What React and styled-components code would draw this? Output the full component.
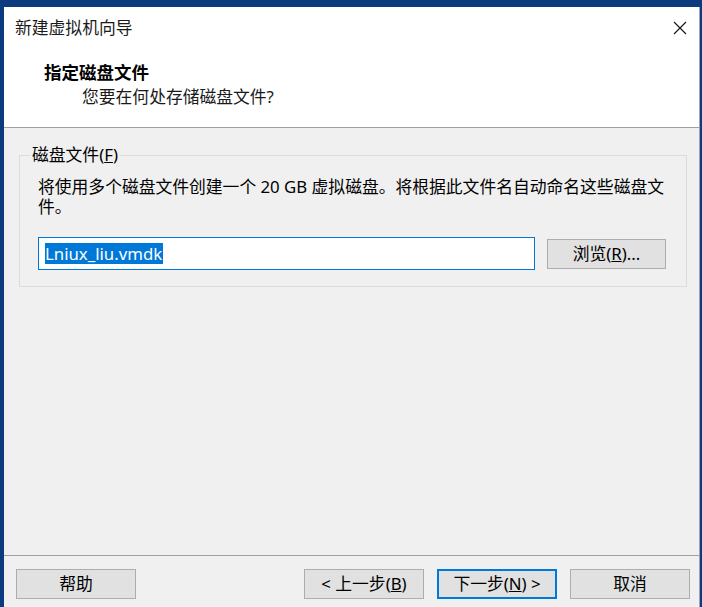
import React from "react"
import styled, { createGlobalStyle } from "styled-components"

const GlobalStyle = createGlobalStyle`
	html, body {
		margin: 0;
		padding: 0;
		background: #0b3a7e;
	}
	* {
		box-sizing: border-box;
	}
`

const FONT = `"Noto Sans", "Noto Sans CJK SC", sans-serif`

export default function App() {
	return (
		<>
			<GlobalStyle />
			<Frame>
				<Dialog>
					<TitleBar>
						<Title>新建虚拟机向导</Title>
						<CloseIcon viewBox="0 0 14 14">
							<path d="M1 1 L13 13 M13 1 L1 13" stroke="#1a1a1a" strokeWidth="1.2" />
						</CloseIcon>
					</TitleBar>

					<Header>
						<Heading>指定磁盘文件</Heading>
						<SubHeading>您要在何处存储磁盘文件?</SubHeading>
					</Header>

					<Body>
						<Group>
							<Legend>
								磁盘文件(<u>F</u>)
							</Legend>
							<GroupContent>
								<Description>
									将使用多个磁盘文件创建一个 20 GB 虚拟磁盘。将根据此文件名自动命名这些磁盘文件。
								</Description>
								<FileRow>
									<TextField>
										<Selected>Lniux_liu.vmdk</Selected>
									</TextField>
									<Button $width={119}>
										浏览(<u>R</u>)...
									</Button>
								</FileRow>
							</GroupContent>
						</Group>
					</Body>

					<Footer>
						<Button>帮助</Button>
						<Spacer />
						<Button>
							&lt; 上一步(<u>B</u>)
						</Button>
						<Button $primary>
							下一步(<u>N</u>) &gt;
						</Button>
						<Button>取消</Button>
					</Footer>
				</Dialog>
			</Frame>
		</>
	)
}

const Frame = styled.div`
	width: 702px;
	height: 607px;
	padding: 7px 2px 0 4px;
	background: #0b3a7e;
	overflow: hidden;
	display: flex;
`

const Dialog = styled.div`
	flex: 1;
	min-width: 0;
	display: flex;
	flex-direction: column;
	background: #f0f0f0;
	border-right: 1px solid #9ba6b4;
	font-family: ${FONT};
	font-size: 16.8px;
	color: #000;
`

const TitleBar = styled.div`
	height: 42px;
	display: flex;
	align-items: center;
	justify-content: space-between;
	padding: 0 12px 0 11px;
	background: #fff;
`

const Title = styled.div`
	line-height: 20px;
	color: #1a1a1a;
`

const CloseIcon = styled.svg`
	width: 14px;
	height: 14px;
`

const Header = styled.div`
	height: 79px;
	padding: 11px 0 0 40px;
	background: #fff;
	border-bottom: 1px solid #a0a0a0;
`

const Heading = styled.div`
	font-size: 17.5px;
	font-weight: 700;
	line-height: 24px;
`

const SubHeading = styled.div`
	line-height: 24px;
	margin-top: 1px;
	padding-left: 38px;
	color: #1a1a1a;
`

const Body = styled.div`
	flex: 1;
	padding: 17px 12px 0 15px;
`

const Group = styled.fieldset`
	margin: 0;
	padding: 0;
	border: 1px solid #dcdcdc;
	min-width: 0;
`

const Legend = styled.legend`
	margin-left: 10px;
	padding: 0 2px;
	line-height: 20px;
`

const GroupContent = styled.div`
	padding: 12px 15px 16px 18px;
`

const Description = styled.div`
	line-height: 20px;
`

const FileRow = styled.div`
	display: flex;
	align-items: center;
	gap: 12px;
	margin-top: 20px;
`

const TextField = styled.div`
	width: 497px;
	height: 33px;
	display: flex;
	align-items: center;
	padding-left: 6px;
	background: #fff;
	border: 1px solid #0078d7;
`

const Selected = styled.span`
	background: #0078d7;
	color: #fff;
	line-height: 21px;
	padding-right: 1px;
`

const Button = styled.div`
	width: ${(p) => p.$width || 120}px;
	height: 30px;
	display: flex;
	align-items: center;
	justify-content: center;
	background: #e1e1e1;
	border: ${(p) => (p.$primary ? "2px solid #0078d7" : "1px solid #adadad")};
	line-height: 20px;
	white-space: pre;
`

const Spacer = styled.div`
	flex: 1;
`

const Footer = styled.div`
	height: 52px;
	display: flex;
	align-items: flex-start;
	gap: 13px;
	padding: 13px 9px 0 12px;
	border-top: 1px solid #a0a0a0;
`
